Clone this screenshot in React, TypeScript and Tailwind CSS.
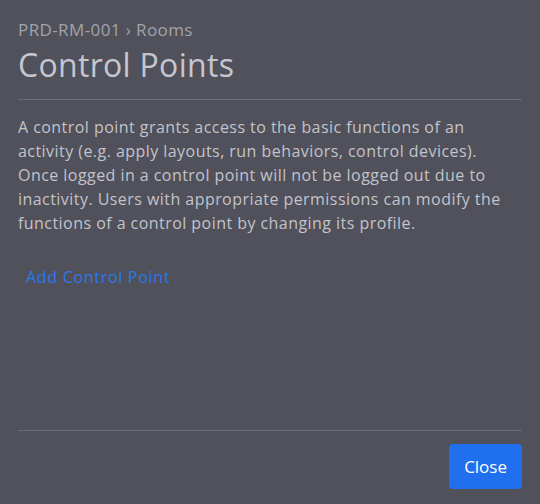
import React from 'react';

export default function App() {
  return (
    <div
      className="w-[540px] h-[504px] bg-[#50515a] flex flex-col px-[18px] text-[#c3c3cc]"
      style={{ fontFamily: '"Open Sans", "Liberation Sans", sans-serif' }}
    >
      {/* Header */}
      <div className="pt-[19px] pb-[13px] border-b border-[#6c6d75]">
        <div className="text-[17px] leading-[22px] tracking-[0.4px] text-[#a3a3ae]">PRD-RM-001 › Rooms</div>
        <h1 className="text-[32px] leading-[42px] mt-[3px] tracking-[0.3px] text-[#c6c6d2]">Control Points</h1>
      </div>

      {/* Body */}
      <div className="flex-1 pt-[15px]">
        <p className="text-[16px] leading-[24px] tracking-[0.45px]">
          A control point grants access to the basic functions of an
          <br />
          activity (e.g. apply layouts, run behaviors, control devices).
          <br />
          Once logged in a control point will not be logged out due to
          <br />
          inactivity. Users with appropriate permissions can modify the
          <br />
          functions of a control point by changing its profile.
        </p>
        <button className="mt-[30px] ml-[8px] text-[16px] leading-[24px] tracking-[0.7px] text-[#2a78ef]">Add Control Point</button>
      </div>

      {/* Footer */}
      <div className="border-t border-[#6c6d75] flex justify-end pt-[13px] pb-[15px]">
        <button className="h-[45px] px-[15px] rounded-[4px] bg-[#1f6fef] text-white text-[17px]">Close</button>
      </div>
    </div>
  );
}
